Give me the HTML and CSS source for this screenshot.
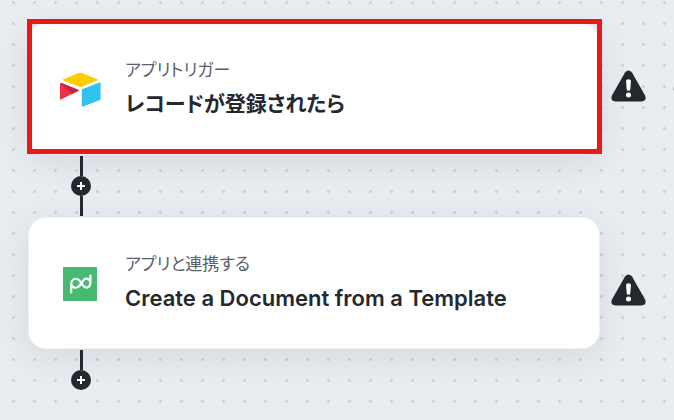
FILE: index.html
```html
<!DOCTYPE html>
<html lang="ja">
<head>
	<meta charset="UTF-8">
	<meta name="viewport" content="width=device-width, initial-scale=1.0">
	<title>フロー</title>
	<link rel="stylesheet" href="styles.css">
</head>
<body>

	<main class="flow">
		<!-- トリガー -->
		<section class="step">
			<div class="card card-selected">
				<svg class="logo" viewBox="0 0 48 48" aria-hidden="true">
					<path fill="#ffcc02" d="M22.6 7 L7.4 13.2 Q6.2 13.9 7.4 14.5 L22.8 20.6 Q24.4 21.2 26 20.6 L41.2 14.5 Q42.5 13.9 41.2 13.2 L26 7 Q24.3 6.3 22.6 7z"/>
					<path fill="#32c2f2" d="M25.8 24.1 V39.8 Q25.9 41 27 40.6 L44 34 Q44.6 33.7 44.6 33 V17.3 Q44.5 16.3 43.4 16.6 L26.6 23.1 Q25.8 23.4 25.8 24.1z"/>
					<path fill="#ee3048" d="M22.2 25 L5.4 33.3 Q4 33.9 4 32.6 V17.9 Q4.2 16.5 5.5 17 L22.1 23.7 Q23 24.3 22.2 25z"/>
					<path fill="#c22742" d="M16 28 L4.4 17.3 Q4.9 16.8 5.5 17 L22.1 23.7 Q23 24.3 22.2 25z"/>
				</svg>
				<div class="card-text">
					<p class="label">アプリトリガー</p>
					<h2 class="title">レコードが登録されたら</h2>
				</div>
			</div>
			<svg class="warning" viewBox="0 0 36 32" role="img" aria-label="警告">
				<path fill="#24292f" d="M14.4 2.2 Q18 -2 21.6 2.2 L34.9 25.4 Q37.3 31.2 31.5 32 H4.5 Q-1.3 31.2 1.1 25.4z"/>
				<path fill="#fff" d="M15.5 10.8 Q15.5 9 18 9 T20.5 10.8 L19.9 19 Q19.7 21 18 21 T16.1 19z"/>
				<circle fill="#fff" cx="18" cy="25.2" r="2.6"/>
			</svg>
		</section>

		<div class="connector">
			<span class="line"></span>
			<button class="add" type="button" aria-label="追加"></button>
			<span class="line"></span>
		</div>

		<!-- アクション -->
		<section class="step">
			<div class="card">
				<svg class="logo" viewBox="0 0 48 48" aria-hidden="true">
					<path fill="#48b971" d="M7 7h34v34H7z"/>
					<path fill="none" stroke="#fff" stroke-width="2.2" stroke-linecap="round" d="M15.2 32.4 V24.5 C15.2 18.5 21 17.2 23.7 20.8 L27.2 25.7 C29.8 29.2 34.4 27.3 34.4 23 V15.5 M34.4 23 C34.4 18.8 29.8 17.1 27.2 20.6 L23.7 25.5 C21 29.2 15.2 28 15.2 23.8"/>
				</svg>
				<div class="card-text">
					<p class="label">アプリと連携する</p>
					<h2 class="title title-latin" lang="en">Create a Document from a Template</h2>
				</div>
			</div>
			<svg class="warning warning-low" viewBox="0 0 36 32" role="img" aria-label="警告">
				<path fill="#24292f" d="M14.4 2.2 Q18 -2 21.6 2.2 L34.9 25.4 Q37.3 31.2 31.5 32 H4.5 Q-1.3 31.2 1.1 25.4z"/>
				<path fill="#fff" d="M15.5 10.8 Q15.5 9 18 9 T20.5 10.8 L19.9 19 Q19.7 21 18 21 T16.1 19z"/>
				<circle fill="#fff" cx="18" cy="25.2" r="2.6"/>
			</svg>
		</section>

		<div class="connector">
			<span class="line"></span>
			<button class="add" type="button" aria-label="追加"></button>
		</div>
	</main>
	<span class="port"></span>

</body>
</html>
```

FILE: styles.css
```css
* {
	box-sizing: border-box;
}
body {
	position: relative;
	margin: 0;
	min-height: 100vh;
	overflow-x: hidden;
	background-color: #e9edf2;
	background-image: radial-gradient(circle, #cdd2d7 1px, transparent 2px);
	background-size: 21px 21px;
	background-position: 3px 13px;
	color: #24292f;
	font-family: Inter, "Noto Sans CJK JP", sans-serif;
	font-feature-settings: "palt";
}
.flow {
	padding: 23px 28px;
}
.step {
	display: flex;
	align-items: flex-start;
	gap: 11px;
}
.card {
	position: relative;
	flex: 1;
	display: flex;
	align-items: center;
	gap: 21px;
	padding: 32px 27px 30px;
	background-color: #fff;
	border: 1px solid #f0f3f5;
	border-radius: 18px;
	box-shadow: 0 8px 32px rgba(36, 50, 60, 0.1);
}
/* Рамка выделения поверх карточки */
.card-selected::after {
	content: "";
	position: absolute;
	inset: -5px -3px 0 -2px;
	border: 5px solid #e71a1a;
}
.logo {
	width: 48px;
	height: 48px;
	flex: none;
}
.label {
	margin: 0;
	color: #57606a;
	font-size: 17px;
	line-height: 28px;
	font-weight: 400;
}
.title {
	margin: 0;
	font-size: 21px;
	line-height: 40px;
	font-weight: 600;
}
.title-latin {
	font-size: 22px;
}
.warning {
	flex: none;
	width: 35px;
	height: 32px;
	margin-top: 47px;
}
.warning-low {
	margin-top: 57px;
}
.connector {
	display: flex;
	flex-direction: column;
	align-items: center;
	width: 20px;
	margin-left: 43px;
	padding: 1px 0;
}
.line {
	width: 3px;
	height: 20px;
	background-color: #24292f;
}
.add {
	width: 20px;
	height: 20px;
	padding: 0;
	border: 0;
	border-radius: 50%;
	background: linear-gradient(#fff, #fff) center / 8px 2px no-repeat, linear-gradient(#fff, #fff) center / 2px 8px no-repeat, #24292f;
	cursor: pointer;
}
/* Точка входа соседнего узла у края холста */
.port {
	position: absolute;
	top: 87px;
	right: -3px;
	width: 4px;
	height: 4px;
	border-radius: 50%;
	background-color: #a9aeb3;
}
```
